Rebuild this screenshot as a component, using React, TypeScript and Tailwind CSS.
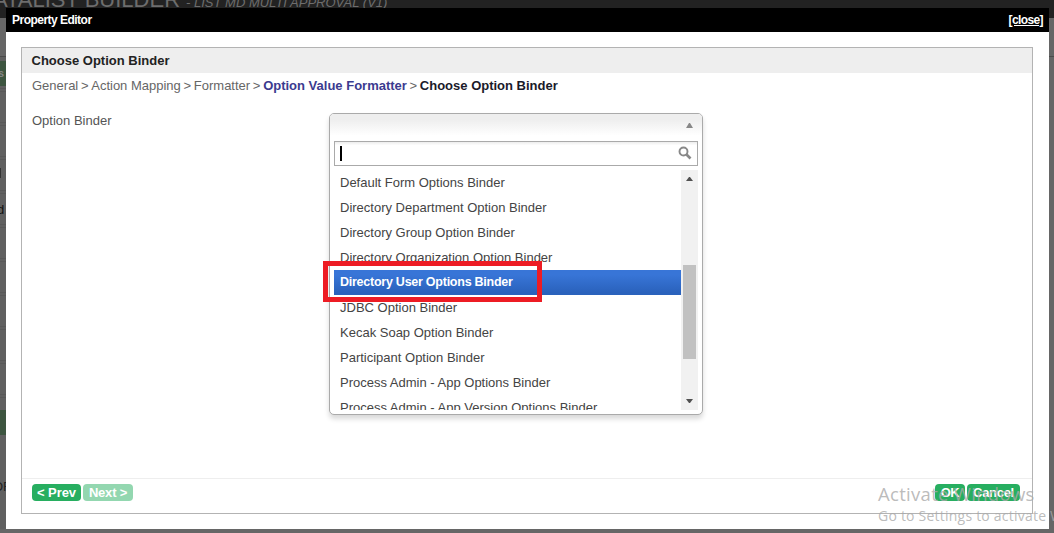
const options = [
  { label: "Default Form Options Binder" },
  { label: "Directory Department Option Binder" },
  { label: "Directory Group Option Binder" },
  { label: "Directory Organization Option Binder" },
  { label: "Directory User Options Binder", selected: true },
  { label: "JDBC Option Binder" },
  { label: "Kecak Soap Option Binder" },
  { label: "Participant Option Binder" },
  { label: "Process Admin - App Options Binder" },
  { label: "Process Admin - App Version Options Binder" },
];

function Backdrop() {
  return (
    <div className="h-full bg-[#666]">
      <div className="flex h-[18px] items-start overflow-hidden whitespace-nowrap bg-[#222] text-[#6d6d6d]">
        <span className="-mt-[15px] -ml-[7px] text-[22px] leading-[30px]">ATALIST BUILDER</span>
        <span className="-mt-[9px] ml-[6px] text-[13px] leading-[24px] italic">- LIST MD MULTI APPROVAL (V1)</span>
      </div>
      <div className="h-[39px] border-b border-[#4b4b4b]" />
      <div className="flex h-[472px] w-[6px] flex-col overflow-hidden bg-[#606060] text-[13px]">
        <div className="mt-1 h-[25px] bg-[#3d5540] text-[11px] leading-[25px] font-bold text-[#858585]">
          <span className="-ml-[2px]">s</span>
        </div>
        <div className="flex h-[324px] flex-col bg-[repeating-linear-gradient(to_bottom,#606060_0px,#606060_2px,#585858_2px,#585858_3px,#606060_3px,#606060_5px,#585858_5px,#585858_6px,#606060_6px,#606060_34px)]">
          <div className="mt-[82px] h-[10px] w-px bg-[#333]" />
          <div className="mt-[24px] h-4 leading-4 text-[#111]">
            <span className="-ml-[3px]">d</span>
          </div>
        </div>
        <div className="h-[25px] shrink-0 bg-[#3d5540]" />
        <div className="mt-[42px] whitespace-nowrap text-[#222]">
          <span className="-ml-[7px]">OF</span>
        </div>
      </div>
    </div>
  );
}

function Dropdown() {
  return (
    <div className="relative h-[302px] w-[374px] rounded-[5px] border border-[#aaa] bg-white px-1 shadow-[0_4px_5px_rgba(0,0,0,0.15)]">
      <div className="-mx-1 flex h-[27px] items-start justify-end rounded-t-[4px] bg-linear-to-b from-[#eee] from-20% to-white to-80% pt-[9px] pr-[9px]">
        <svg className="h-[5px] w-[7px]" viewBox="0 0 7 5" fill="#888"><path d="M3 0h1l3 5H0z" /></svg>
      </div>
      <div className="flex h-[25px] w-[364px] items-center justify-between border border-[#aaa] bg-linear-to-b from-[#eee] from-1% to-white to-15% pr-[5px] pl-[5px]">
        <span className="h-[15px] w-[1.5px] bg-black" />
        <svg className="-mt-px h-[14px] w-[14px]" viewBox="0 0 14 14" fill="none" stroke="#888">
          <circle cx="5.5" cy="5.5" r="4" strokeWidth="1.9" />
          <path d="m8.5 8.5 4 4" strokeWidth="2.6" />
        </svg>
      </div>
      <div className="mt-1 flex h-[240px] w-[364px]">
        <ul className="h-full w-[347px] overflow-hidden text-[13px] leading-[25px] text-[#444]">
          {options.map((option) => (
            <li
              key={option.label}
              className={`h-[25px] whitespace-nowrap pl-[6px] ${option.selected ? "bg-linear-to-b from-[#3875d7] from-20% to-[#2a62bc] to-90% text-[12.5px] tracking-[-0.25px] font-bold text-white" : ""}`}
            >
              {option.label}
            </li>
          ))}
        </ul>
        <div className="flex h-full w-[17px] flex-col items-center bg-[#f1f1f1]">
          <svg className="mt-[7px] h-[4px] w-[7px]" viewBox="0 0 7 4" fill="#505050"><path d="M3 0h1l3 4H0z" /></svg>
          <div className="mt-[84px] h-[94px] w-[13px] bg-[#c1c1c1]" />
          <svg className="mt-[40px] h-[4px] w-[7px]" viewBox="0 0 7 4" fill="#505050"><path d="M0 0h7L4 4H3z" /></svg>
        </div>
      </div>
      <div className="absolute top-[147px] -left-[7px] h-[41px] w-[219px] border-[5px] border-[#ed1c24]" />
    </div>
  );
}

export default function App() {
  return (
    <div className="relative h-[533px] w-[1054px] overflow-hidden font-['Liberation_Sans',Arial,sans-serif]">
      <Backdrop />
      <section className="absolute top-2 left-[6px] flex h-[521px] w-[1043px] flex-col bg-white">
        <header className="flex h-6 items-center justify-between bg-black pr-[6px] pl-[6px] text-[12px] font-bold text-white">
          <h1 className="tracking-[-0.52px]">Property Editor</h1>
          <button className="text-[12px] tracking-[-0.6px] underline">[close]</button>
        </header>
        <div className="mx-[15px] mt-[15px] flex h-[467px] w-[1012px] flex-col border border-[#b3b3b3]">
          <h2 className="h-[25px] bg-[#eee] pl-[9.5px] text-[13px] leading-[25px] font-bold text-[#222]">Choose Option Binder</h2>
          <nav className="flex h-[25px] items-center gap-[2.7px] whitespace-nowrap pl-[10px] text-[13px] text-[#666]">
            <span>General</span><span>&gt;</span>
            <span>Action Mapping</span><span>&gt;</span>
            <span>Formatter</span><span>&gt;</span>
            <span className="font-bold text-[#3b3b8f]">Option Value Formatter</span><span>&gt;</span>
            <span className="font-bold text-[#1a1a2a]">Choose Option Binder</span>
          </nav>
          <div className="flex flex-1 pt-[15px] pl-[10px]">
            <label className="h-[15px] w-[297px] text-[13px] leading-[15px] text-[#555]">Option Binder</label>
            <Dropdown />
          </div>
          <footer className="flex h-[35px] items-start justify-between border-t border-[#eee] pt-[5px] pr-[12px] pl-[10px] text-[13px] leading-[17px] font-bold text-white">
            <div className="flex gap-[2px]">
              <button className="h-[17px] w-[49px] rounded-[4px] bg-[#27ae60] tracking-[-0.1px]">&lt; Prev</button>
              <button className="h-[17px] w-[50px] rounded-[4px] bg-[#93d7b0] tracking-[-0.2px]">Next &gt;</button>
            </div>
            <div className="flex gap-[2px]">
              <button className="h-[17px] w-[30px] rounded-[4px] bg-[#27ae60] tracking-[-0.5px]">OK</button>
              <button className="h-[17px] w-[53px] rounded-[4px] bg-[#27ae60] tracking-[-0.3px]">Cancel</button>
            </div>
          </footer>
        </div>
      </section>
      <div className="absolute top-[481px] left-[878px] whitespace-nowrap font-['Open_Sans','Noto_Sans',sans-serif] text-[#aaa]/80">
        <p className="text-[18.5px] leading-[25px] tracking-[0.3px]">Activate Windows</p>
        <p className="text-[14px] leading-[20px] tracking-[0.22px]">Go to Settings to activate Windows.</p>
      </div>
    </div>
  );
}
